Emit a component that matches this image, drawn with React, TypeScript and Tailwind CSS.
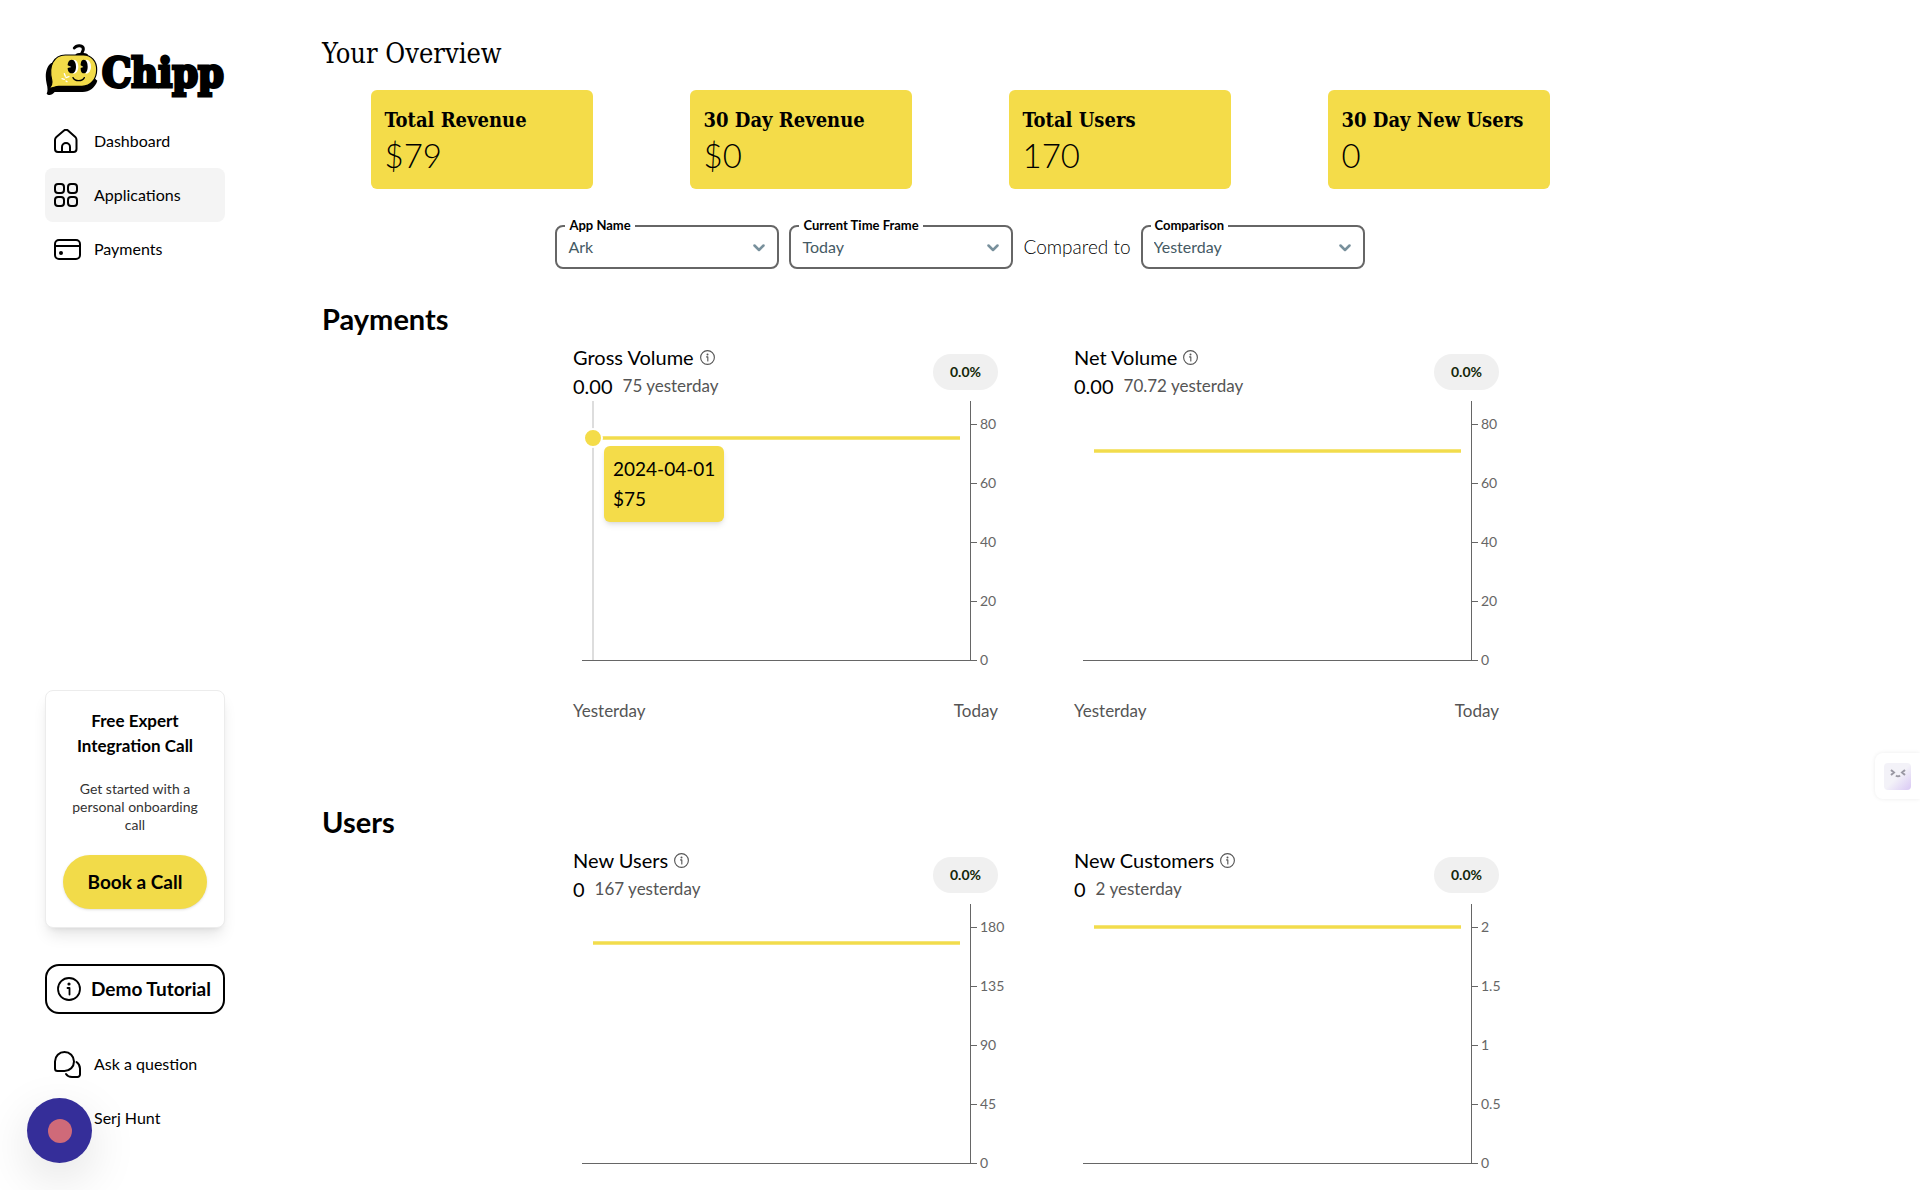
import { useState } from "react";
import type { ReactNode } from "react";

const SERIF = "font-['DejaVu_Serif_Condensed','DejaVu_Serif',serif]";

function Mascot() {
  return (
    <svg viewBox="9 9 159 159" className="h-[53px] w-[53px] shrink-0" aria-hidden="true">
      <path
        d="M28 66C12 76 8 104 14 128c3 12 4 22 0 30 4 6 16 6 24-5h84c20 0 38-14 44-34L100 60z"
        fill="#000"
      />
      <path d="M102 42c4-6 28-6 34 0z" fill="#000" stroke="#000" strokeWidth="4" strokeLinejoin="round" />
      <path
        d="M119 40c1-8 5-10 5-16 0-12-20-13-27-3"
        fill="none"
        stroke="#000"
        strokeWidth="9"
        strokeLinecap="round"
      />
      <path
        d="M70 42h54c24 0 40 18 40 44 0 28-18 50-44 50H50c-10 0-18 6-30 6 8-6 12-14 9-26-10-40 6-74 41-74z"
        fill="#f2db49"
        stroke="#000"
        strokeWidth="3.500"
        strokeLinejoin="round"
      />
      <ellipse cx="96" cy="77" rx="13" ry="21" fill="#fff" />
      <ellipse cx="134" cy="77" rx="13" ry="21" fill="#fff" />
      <path d="M89 56c9 0 13 10 13 21s-4 20-13 20-12-9-12-16l11-3-11-5c0-8 4-17 12-17z" fill="#000" />
      <path d="M125 56c9 0 12 10 12 21s-4 20-12 20-9-9-9-16l8-3-8-5c0-8 2-17 9-17z" fill="#000" />
      <path d="M93 110c6 12 28 12 34 0" fill="none" stroke="#000" strokeWidth="4" strokeLinecap="round" />
      <path d="M67 98l3 8M81 107l-9 3M60 113l7 2M72 120l3 2" fill="none" stroke="#fff" strokeWidth="4" strokeLinecap="round" />
    </svg>
  );
}

function Icon({ children, w = 24, h = 24 }: { children: ReactNode; w?: number; h?: number }) {
  return (
    <svg
      width={w}
      height={h}
      viewBox={`0 0 ${w} ${h}`}
      fill="none"
      stroke="currentColor"
      strokeWidth="2"
      strokeLinecap="round"
      strokeLinejoin="round"
      className="shrink-0"
      aria-hidden="true"
    >
      {children}
    </svg>
  );
}

const HomeIcon = () => (
  <Icon>
    <path d="M1 11c0-1.200.5-2.300 1.400-3.100l7.600-6.300a3 3 0 0 1 4 0l7.300 6.300c.8.800 1.200 1.800 1.200 3V20a3 3 0 0 1-3 3H4a3 3 0 0 1-3-3z" />
    <path d="M8 23v-5a4 4 0 0 1 8 0v5" />
  </Icon>
);
const GridIcon = () => (
  <Icon>
    <rect x="1" y="1" width="9" height="9" rx="3" />
    <rect x="14" y="1" width="9" height="9" rx="3" />
    <rect x="1" y="14" width="9" height="9" rx="3" />
    <rect x="14" y="14" width="9" height="9" rx="3" />
  </Icon>
);
const CardIcon = () => (
  <Icon w={27} h={21}>
    <rect x="1" y="1" width="25" height="19" rx="4" />
    <path d="M1 7h25" />
    <circle cx="7" cy="14" r="1" fill="currentColor" />
  </Icon>
);
const ChatIcon = () => (
  <Icon w={27} h={27}>
    <path d="M1 10.500a9.500 9.500 0 1 1 9.500 9.500H3.500A2.500 2.500 0 0 1 1 17.500z" />
    <path d="M22.500 11c2.200 1.600 3.500 4 3.500 6.500V23.500a2.500 2.500 0 0 1-2.500 2.500H18c-2.600 0-4.800-1.100-6-3" />
  </Icon>
);

function InfoIcon({ size }: { size: number }) {
  return (
    <svg
      width={size}
      height={size}
      viewBox="0 0 24 24"
      fill="none"
      stroke="currentColor"
      strokeWidth="1.800"
      strokeLinecap="round"
      strokeLinejoin="round"
      aria-hidden="true"
      className="shrink-0"
    >
      <circle cx="12" cy="12" r="11" />
      <path d="M10.500 11H12.500V17.500" />
      <circle cx="12" cy="7" r="0.700" fill="currentColor" />
    </svg>
  );
}

function NavItem({ icon, label, active = false }: { icon: ReactNode; label: string; active?: boolean }) {
  return (
    <a
      href="#"
      className={
        active
          ? "flex h-[54px] items-center gap-3 rounded-lg bg-[#f4f4f4] pl-[9px] text-base"
          : "flex h-[54px] items-center gap-3 rounded-lg pl-[9px] text-base"
      }
    >
      <span className="flex w-7 items-center">{icon}</span>
      {label}
    </a>
  );
}

function Sidebar() {
  return (
    <aside className="flex w-[180px] shrink-0 flex-col justify-between pt-11 pb-[45px]">
      <div>
        <a href="#" aria-label="Chipp home" className="mb-[17px] flex items-center gap-1">
          <Mascot />
          <span
            className={`${SERIF} h-[53px] text-[41px] leading-[58px] font-bold [-webkit-text-stroke:3px_black]`}
          >
            Chipp
          </span>
        </a>
        <nav>
          <NavItem icon={<HomeIcon />} label="Dashboard" />
          <NavItem icon={<GridIcon />} label="Applications" active />
          <NavItem icon={<CardIcon />} label="Payments" />
        </nav>
      </div>
      <div>
        <section className="rounded-lg border border-[#ececec] bg-white px-[17px] pt-[17px] pb-[18px] text-center shadow-lg">
          <h2 className="text-[17px] leading-[25px] font-bold">Free Expert Integration Call</h2>
          <p className="mt-[22px] text-sm leading-[18px] text-[#333]">Get started with a personal onboarding call</p>
          <button className="mt-[21px] h-[54px] w-full rounded-full bg-[#f2db49] text-[19px] font-bold shadow-sm">
            Book a Call
          </button>
        </section>
        <button className="mt-9 mb-[23px] flex h-[50px] w-full items-center gap-2.5 rounded-[14px] border-2 border-black pl-[10px] text-[19px] font-bold whitespace-nowrap">
          <InfoIcon size={24} />
          Demo Tutorial
        </button>
        <NavItem icon={<ChatIcon />} label="Ask a question" />
        <NavItem icon={null} label="Serj Hunt" />
      </div>
    </aside>
  );
}

function StatCard({ title, value }: { title: string; value: string }) {
  return (
    <div className="w-[222px] rounded-md bg-[#f4dc49] px-3.5 pt-4 pb-[13px]">
      <h2 className={`${SERIF} text-xl leading-7 font-bold whitespace-nowrap`}>{title}</h2>
      <p className="text-[33px] leading-[42px] font-light">{value}</p>
    </div>
  );
}

function FieldSelect({ id, label, options }: { id: string; label: string; options: string[] }) {
  const [value, setValue] = useState(options[0]);
  return (
    <div className="relative w-56">
      <label htmlFor={id} className="absolute -top-2 left-2.5 bg-white px-1 text-[13px] leading-4 font-bold">
        {label}
      </label>
      <select
        id={id}
        value={value}
        onChange={(e) => setValue(e.target.value)}
        className="h-11 w-full appearance-none rounded-lg border-2 border-[#666] bg-transparent px-[11px] text-base text-[#455a64]"
      >
        {options.map((o) => (
          <option key={o}>{o}</option>
        ))}
      </select>
      <svg
        viewBox="0 0 12 8"
        className="pointer-events-none absolute top-[19px] right-3.5 h-2 w-3"
        fill="none"
        stroke="#78909c"
        strokeWidth="2.500"
        strokeLinecap="round"
        strokeLinejoin="round"
        aria-hidden="true"
      >
        <path d="M1.500 1.500l4.500 4.500 4.500-4.500" />
      </svg>
    </div>
  );
}

type Metric = {
  title: string;
  value: string;
  previous: string;
  ticks: string[];
  lineY: number;
  range?: [string, string];
  tooltip?: { date: string; amount: string };
};

function Chart({ metric }: { metric: Metric }) {
  const bottom = 259;
  const step = 59;
  return (
    <article className="relative">
      <header className="flex items-center justify-between">
        <div>
          <h3 className="flex items-center gap-1.5 text-xl leading-7">
            {metric.title}
            <span className="text-[#555]">
              <InfoIcon size={15} />
            </span>
          </h3>
          <p className="flex items-center gap-2.5 text-xl leading-[30px]">
            {metric.value}
            <span className="text-[17px] text-[#555]">{metric.previous}</span>
          </p>
        </div>
        <span className="flex h-9 w-[65px] items-center justify-center rounded-full bg-[#f0f0f0] text-sm font-bold text-[#14280a]">
          0.0%
        </span>
      </header>
      <svg viewBox="0 0 425 264" className="block w-full overflow-visible" role="img" aria-label={metric.title}>
        {metric.tooltip && <path d={`M20 0V${bottom}`} stroke="#ddd" strokeWidth="2" />}
        <path d={`M9 ${bottom + 0.5}H404M397.500 0V${bottom}`} stroke="#666" fill="none" />
        {metric.ticks.map((t, i) => (
          <g key={t}>
            <path d={`M397 ${bottom - i * step + 0.5}H404`} stroke="#666" />
            <text x="407" y={bottom - i * step + 5} fontSize="14" fill="#666">
              {t}
            </text>
          </g>
        ))}
        <path d={`M20 ${metric.lineY}H387`} stroke="#f2dc4c" strokeWidth="3.500" />
        {metric.tooltip && (
          <circle cx="20" cy={metric.lineY} r="9" fill="#f4dc49" stroke="#fff" strokeWidth="2" />
        )}
      </svg>
      {metric.tooltip && (
        <div className="absolute top-[103px] left-[31px] rounded-md bg-[#f4dc49] px-[9px] py-2 text-[19px] whitespace-nowrap shadow-md">
          <p className="leading-[30px]">{metric.tooltip.date}</p>
          <p className="leading-[30px]">{metric.tooltip.amount}</p>
        </div>
      )}
      {metric.range && (
        <footer className="mt-[34px] flex justify-between text-[17px] leading-6 text-[#555]">
          <span>{metric.range[0]}</span>
          <span>{metric.range[1]}</span>
        </footer>
      )}
    </article>
  );
}

function MetricSection({ title, metrics }: { title: string; metrics: Metric[] }) {
  return (
    <section className="pb-[79px]">
      <h2 className="mb-1 text-[29px] leading-10 font-bold">{title}</h2>
      <div className="mr-[99px] ml-[251px] grid grid-cols-2 gap-[76px]">
        {metrics.map((m) => (
          <Chart key={m.title} metric={m} />
        ))}
      </div>
    </section>
  );
}

const PAYMENTS: Metric[] = [
  {
    title: "Gross Volume",
    value: "0.00",
    previous: "75 yesterday",
    ticks: ["0", "20", "40", "60", "80"],
    lineY: 37,
    range: ["Yesterday", "Today"],
    tooltip: { date: "2024-04-01", amount: "$75" },
  },
  {
    title: "Net Volume",
    value: "0.00",
    previous: "70.72 yesterday",
    ticks: ["0", "20", "40", "60", "80"],
    lineY: 50,
    range: ["Yesterday", "Today"],
  },
];

const USERS: Metric[] = [
  { title: "New Users", value: "0", previous: "167 yesterday", ticks: ["0", "45", "90", "135", "180"], lineY: 39 },
  { title: "New Customers", value: "0", previous: "2 yesterday", ticks: ["0", "0.5", "1", "1.5", "2"], lineY: 23 },
];

export default function App() {
  return (
    <div className="relative flex h-screen overflow-hidden bg-white pl-[45px] font-['Lato',sans-serif] text-black">
      <Sidebar />
      <main className="min-w-0 flex-1 pr-[322px] pl-[97px]">
        <h1 className={`${SERIF} pt-9 text-[27px] leading-9`}>Your Overview</h1>
        <div className="mt-[18px] flex justify-around">
          <StatCard title="Total Revenue" value="$79" />
          <StatCard title="30 Day Revenue" value="$0" />
          <StatCard title="Total Users" value="170" />
          <StatCard title="30 Day New Users" value="0" />
        </div>
        <div className="mt-9 mb-[30px] flex items-center justify-center gap-2.5">
          <FieldSelect id="app-name" label="App Name" options={["Ark"]} />
          <FieldSelect id="time-frame" label="Current Time Frame" options={["Today", "Yesterday"]} />
          <span className="text-[19px] font-light">Compared to</span>
          <FieldSelect id="comparison" label="Comparison" options={["Yesterday", "Today"]} />
        </div>
        <MetricSection title="Payments" metrics={PAYMENTS} />
        <MetricSection title="Users" metrics={USERS} />
      </main>
      <button
        aria-label="Record"
        className="absolute bottom-[27px] left-[27px] flex h-[65px] w-[65px] items-center justify-center rounded-full bg-[#352e99] shadow-[0_16px_50px_rgba(0,0,0,0.12)]"
      >
        <span className="h-6 w-6 rounded-full bg-[#cf6a79]" />
      </button>
      <button
        aria-label="Assistant"
        className="absolute top-[753px] right-0 flex h-[46px] w-[45px] items-center justify-center rounded-l-lg bg-white shadow-[0_0_4px_rgba(0,0,0,0.08)]"
      >
        <span className="flex h-[27px] w-[27px] justify-center rounded bg-linear-to-br from-[#f3f2f8] from-50% to-[#d9c8f4] pt-1.5">
          <svg width="18" height="9" viewBox="0 0 18 9" fill="none" stroke="#9a98a3" strokeWidth="2" aria-hidden="true">
            <path d="M2 1l3 2.500L2 6M16 1l-3 2.500L16 6M7 6.500c1 1 3 1 4 0" />
          </svg>
        </span>
      </button>
    </div>
  );
}
